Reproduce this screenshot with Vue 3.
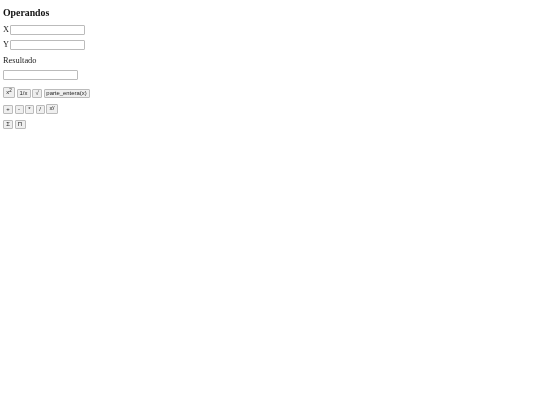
<template>
  <div class="page">
    <h3>Operandos</h3>
    <div class="field"><label>X</label><input type="text" /></div>
    <div class="field"><label>Y</label><input type="text" /></div>
    <p class="label">Resultado</p>
    <div class="field"><input type="text" /></div>
    <div class="btns">
      <button class="tall w12">x<sup>2</sup></button>
      <button class="w14">1/x</button>
      <button class="w10">√</button>
      <button class="w46">parte_entera(x)</button>
    </div>
    <div class="btns">
      <button class="w10">+</button>
      <button class="w9">-</button>
      <button class="w9">*</button>
      <button class="w9">/</button>
      <button class="tall w12">x<sup>y</sup></button>
    </div>
    <div class="btns">
      <button class="w10">Σ</button>
      <button class="w11">Π</button>
    </div>
  </div>
</template>

<script setup>
</script>

<style scoped>
.page {
  display: flex;
  flex-direction: column;
  padding: 8px 3px 0;
  font-family: "Liberation Serif", serif;
  font-size: 8.4px;
  color: #222;
  will-change: transform;
}
h3 {
  margin: 0 0 8px;
  font-size: 9.8px;
  line-height: 9px;
  color: #111;
}
.field {
  display: flex;
  align-items: center;
  gap: 1px;
  height: 10px;
  margin-bottom: 5px;
}
.field label {
  position: relative;
  top: -1px;
}
.label {
  margin: 0 0 5px;
  height: 10px;
  line-height: 11px;
}
input {
  box-sizing: border-box;
  width: 75px;
  height: 9.5px;
  padding: 0;
  border: 1px solid #bbb;
  border-radius: 1px;
  background: #fff;
}
.btns {
  display: flex;
  align-items: flex-end;
  gap: 1.5px;
  margin-bottom: 6px;
}
.field + .btns {
  margin-top: 2px;
}
button {
  box-sizing: border-box;
  display: flex;
  align-items: center;
  justify-content: center;
  height: 9px;
  padding: 0;
  border: 1px solid #bbb;
  border-radius: 1px;
  background: #efefef;
  font-family: "Liberation Sans", sans-serif;
  font-size: 5.9px;
  line-height: 7px;
  color: #222;
}
.tall {
  height: 10.5px;
}
.w9 { width: 9px; }
.w10 { width: 10px; }
.w11 { width: 11px; }
.w12 { width: 12px; }
.w14 { width: 14px; }
.w46 { width: 46px; }
sup {
  align-self: flex-start;
  font-size: 4.5px;
  line-height: 5px;
}
</style>
